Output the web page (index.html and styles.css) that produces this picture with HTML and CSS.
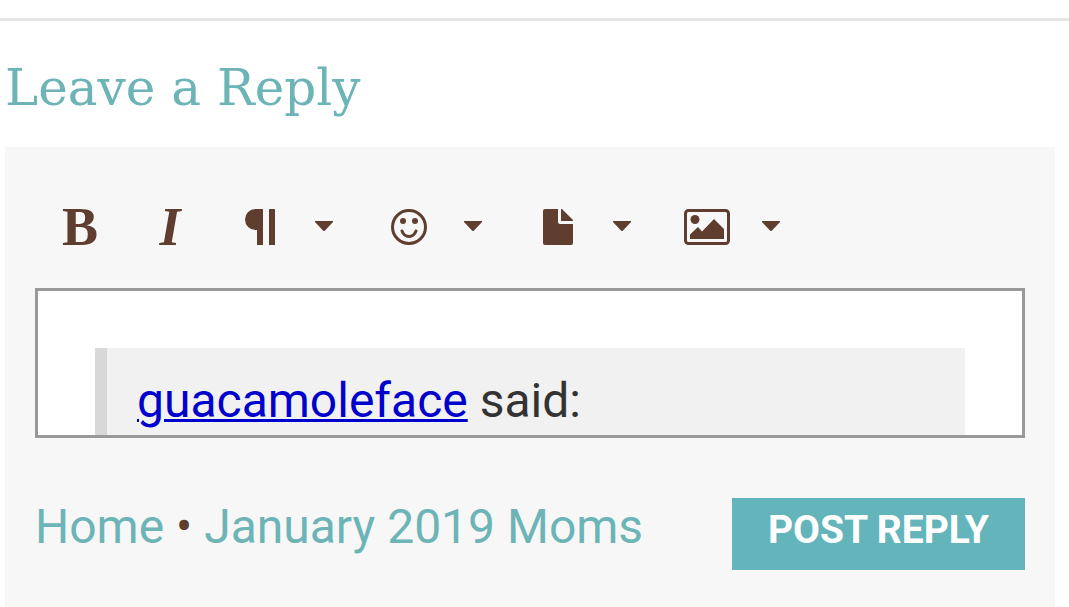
FILE: index.html
```html
<!DOCTYPE html>
<html lang="en">
<head>
    <meta charset="UTF-8">
    <meta name="viewport" content="width=device-width, initial-scale=1.0">
    <title>Leave a Reply</title>
    <link rel="stylesheet" href="styles.css">
</head>
<body>
    <main class="reply">
        <h2>Leave a Reply</h2>

        <form class="panel">
            <!-- Toolbar -->
            <div class="toolbar">
                <button type="button" class="tool bold" aria-label="Bold">B</button>
                <button type="button" class="tool italic" aria-label="Italic">I</button>
                <button type="button" class="tool dropdown" aria-label="Format">
                    <span class="icon">
                        <svg width="30" height="36" viewBox="0 0 30 36"><path d="M10.5 0H18V36H12V21H10.5A10.5 10.5 0 0 1 10.5 0ZM24 0H30V36H24Z"/></svg>
                    </span>
                    <svg class="caret" width="20" height="36" viewBox="0 0 20 36"><path d="M1 12H19V13L11 21.5Q10 22.5 9 21.5L1 13Z"/></svg>
                </button>
                <button type="button" class="tool dropdown" aria-label="Emoji">
                    <span class="icon">
                        <svg width="36" height="36" viewBox="0 0 36 36">
                            <circle class="line" cx="18" cy="18" r="16.5"/>
                            <circle cx="12" cy="12" r="3"/>
                            <circle cx="24" cy="12" r="3"/>
                            <path class="line round" d="M11 22Q13 27.5 18 27.5T25 22"/>
                        </svg>
                    </span>
                    <svg class="caret" width="20" height="36" viewBox="0 0 20 36"><path d="M1 12H19V13L11 21.5Q10 22.5 9 21.5L1 13Z"/></svg>
                </button>
                <button type="button" class="tool dropdown" aria-label="Attach file">
                    <span class="icon">
                        <svg width="30" height="36" viewBox="0 0 30 36"><path d="M2 0H15V13Q15 15 17 15H30V34Q30 36 28 36H2Q0 36 0 34V2Q0 0 2 0ZM18 0H19L30 11V12H18Z"/></svg>
                    </span>
                    <svg class="caret" width="20" height="36" viewBox="0 0 20 36"><path d="M1 12H19V13L11 21.5Q10 22.5 9 21.5L1 13Z"/></svg>
                </button>
                <button type="button" class="tool dropdown" aria-label="Attach image">
                    <span class="icon">
                        <svg width="46" height="36" viewBox="0 0 46 36">
                            <rect class="line" x="1.5" y="1.5" width="43" height="33" rx="3"/>
                            <circle cx="11" cy="10.5" r="4.5"/>
                            <path d="M6 30V25.5L14 18L18 22.5L30 10L40 20V30Z"/>
                        </svg>
                    </span>
                    <svg class="caret" width="20" height="36" viewBox="0 0 20 36"><path d="M1 12H19V13L11 21.5Q10 22.5 9 21.5L1 13Z"/></svg>
                </button>
            </div>

            <!-- Editor -->
            <div class="editor" contenteditable="true" role="textbox" aria-label="Reply">
                <blockquote><a href="#">guacamoleface</a> said:</blockquote>
            </div>

            <!-- Footer -->
            <div class="actions">
                <nav class="crumbs">
                    <a href="#">Home</a> <span>•</span> <a href="#">January 2019 Moms</a>
                </nav>
                <button type="submit" class="btn">POST REPLY</button>
            </div>
        </form>
    </main>
</body>
</html>
```
FILE: styles.css
```css
* {
    margin: 0;
    padding: 0;
    box-sizing: border-box;
}

body {
    padding-top: 18px;
    background: #ffffff;
    color: #5f3d2f;
    font-family: Roboto, sans-serif;
    font-size: 48px;
    line-height: 58px;
    overflow-x: hidden;
}

.reply {
    border-top: 3px solid #e4e4e4;
    padding: 36px 14px 0 5px;
}

h2 {
    margin-bottom: 28px;
    color: #6cb4b6;
    font-family: "DejaVu Serif", serif;
    font-size: 50px;
    font-weight: normal;
    line-height: 62px;
}

.panel {
    padding: 30px 30px 37px;
    background: #f7f7f7;
}

.toolbar {
    display: flex;
    height: 100px;
    margin-bottom: 11px;
}

.tool {
    display: flex;
    justify-content: center;
    align-items: center;
    width: 90px;
    border: none;
    background: none;
    color: #5f3d2f;
    font-family: "Liberation Serif", serif;
    font-size: 54px;
    font-weight: bold;
    cursor: pointer;
}

.italic {
    font-style: italic;
}

.dropdown {
    justify-content: flex-start;
    width: 149px;
}

.icon {
    display: flex;
    justify-content: center;
    width: 90px;
}

.tool svg {
    fill: #5f3d2f;
}

.tool .line {
    fill: none;
    stroke: #5f3d2f;
    stroke-width: 3;
}

.tool .round {
    stroke-linecap: round;
}

.caret {
    margin-left: 9px;
}

.editor {
    height: 150px;
    padding: 57px;
    border: 3px solid #999999;
    background: #ffffff;
    color: #333333;
    overflow: hidden;
}

blockquote {
    padding: 24px 30px;
    border-left: 12px solid #d8d8d8;
    background: #f1f1f1;
}

blockquote a {
    color: #0000cc;
    text-decoration-thickness: 3px;
}

.actions {
    display: flex;
    justify-content: space-between;
    margin-top: 60px;
}

.crumbs a {
    color: #6cb4b6;
    text-decoration: none;
}

.btn {
    height: 72px;
    padding: 0 36px 8px;
    border: none;
    background: #64b5bb;
    color: #ffffff;
    font-family: Roboto, sans-serif;
    font-size: 39px;
    font-weight: bold;
    cursor: pointer;
}
```
